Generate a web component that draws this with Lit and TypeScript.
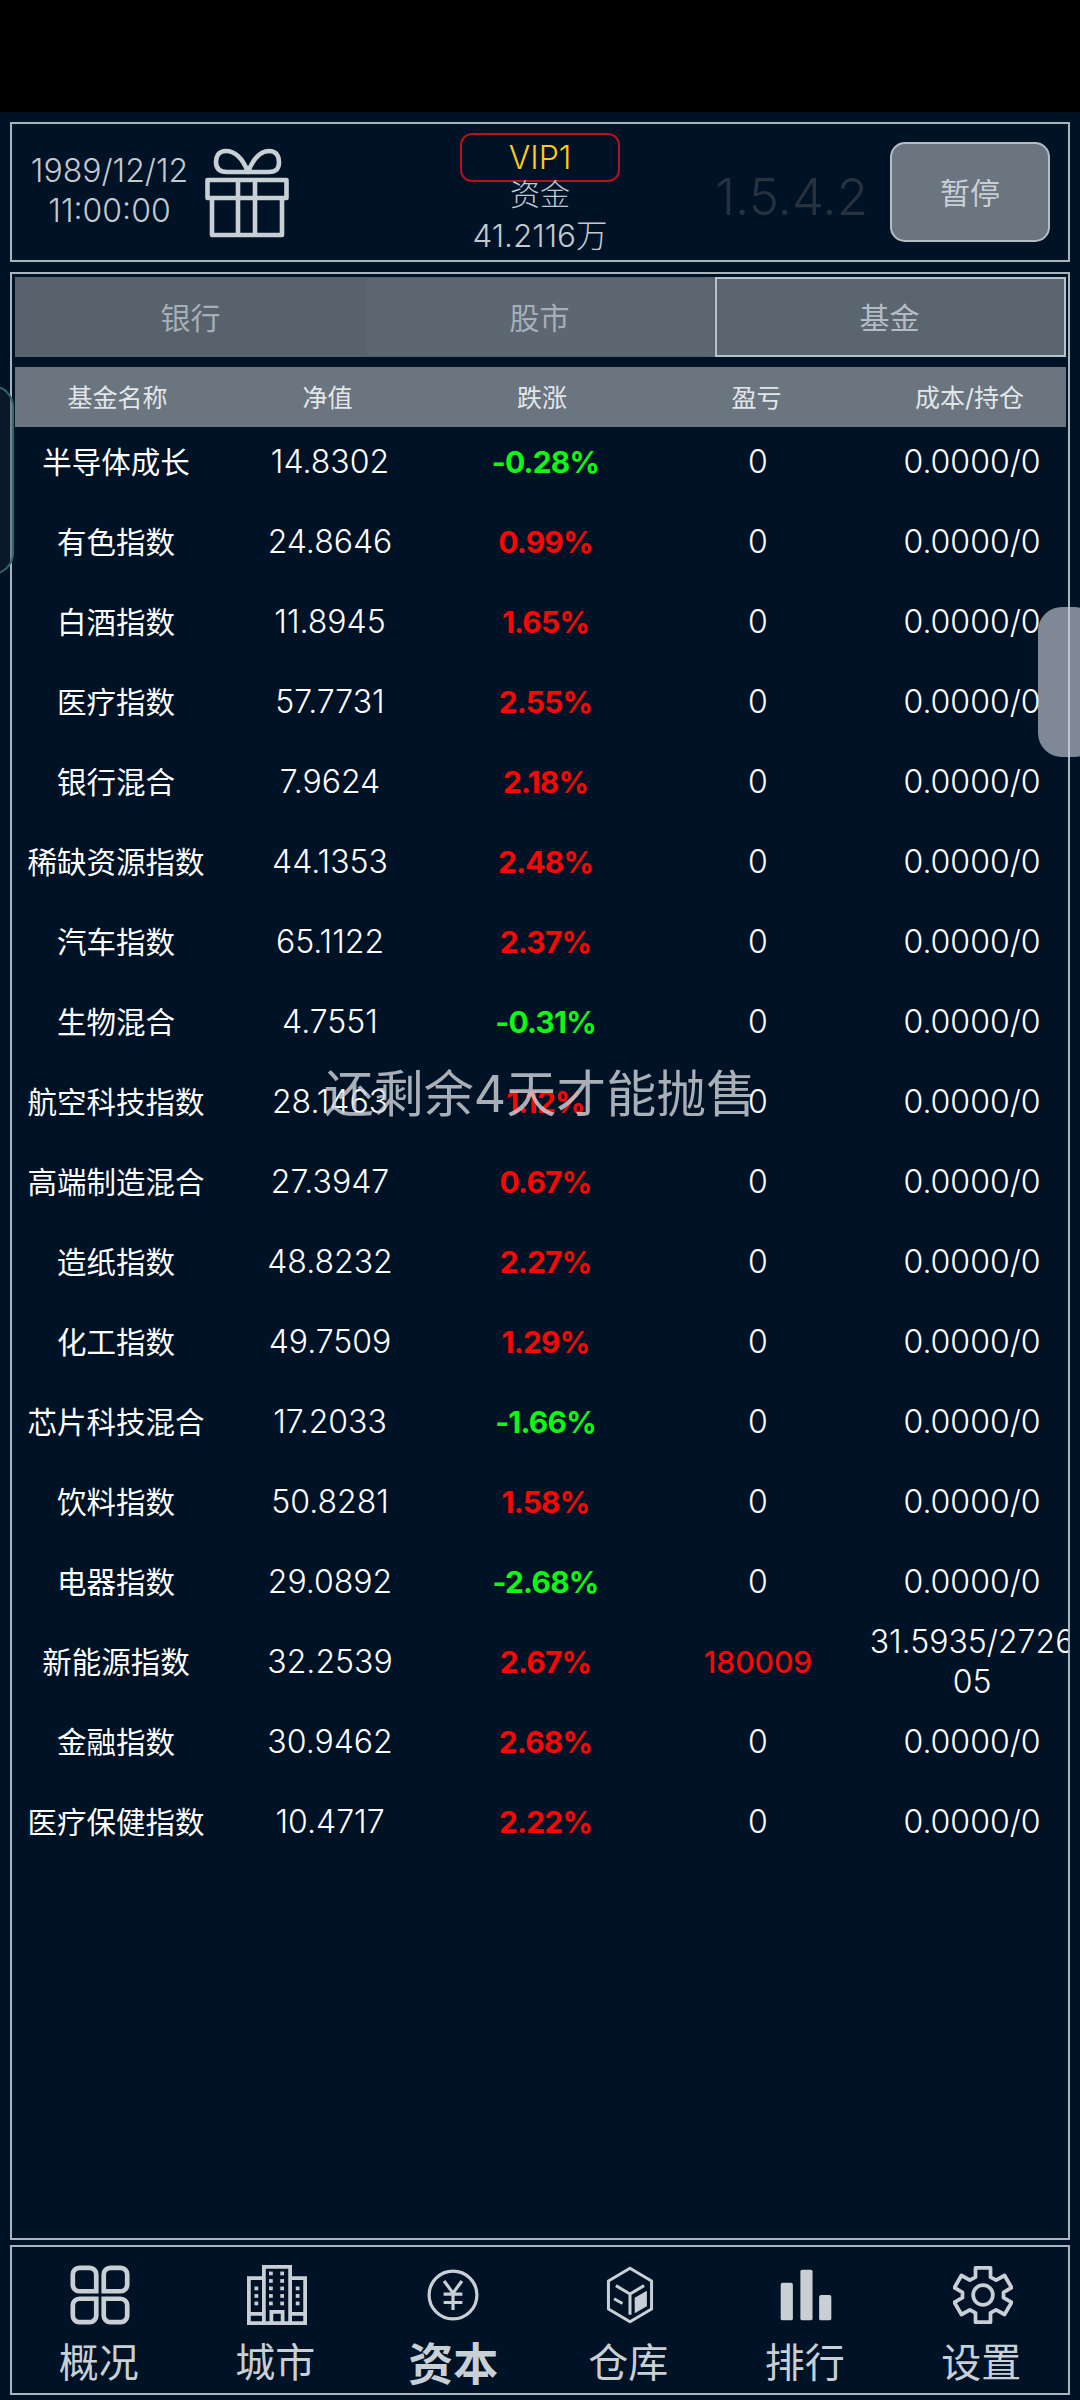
import { LitElement, html, css, svg } from "lit";
import { customElement } from "lit/decorators.js";

const rows: [string, string, string, string, string][] = [
  ["半导体成长", "14.8302", "-0.28%", "0", "0.0000/0"],
  ["有色指数", "24.8646", "0.99%", "0", "0.0000/0"],
  ["白酒指数", "11.8945", "1.65%", "0", "0.0000/0"],
  ["医疗指数", "57.7731", "2.55%", "0", "0.0000/0"],
  ["银行混合", "7.9624", "2.18%", "0", "0.0000/0"],
  ["稀缺资源指数", "44.1353", "2.48%", "0", "0.0000/0"],
  ["汽车指数", "65.1122", "2.37%", "0", "0.0000/0"],
  ["生物混合", "4.7551", "-0.31%", "0", "0.0000/0"],
  ["航空科技指数", "28.1463", "1.12%", "0", "0.0000/0"],
  ["高端制造混合", "27.3947", "0.67%", "0", "0.0000/0"],
  ["造纸指数", "48.8232", "2.27%", "0", "0.0000/0"],
  ["化工指数", "49.7509", "1.29%", "0", "0.0000/0"],
  ["芯片科技混合", "17.2033", "-1.66%", "0", "0.0000/0"],
  ["饮料指数", "50.8281", "1.58%", "0", "0.0000/0"],
  ["电器指数", "29.0892", "-2.68%", "0", "0.0000/0"],
  ["新能源指数", "32.2539", "2.67%", "180009", "31.5935/272605"],
  ["金融指数", "30.9462", "2.68%", "0", "0.0000/0"],
  ["医疗保健指数", "10.4717", "2.22%", "0", "0.0000/0"],
];

const winRows = [7, 15, 23, 31, 39];
const sideRows = [23, 31, 39];
const icons = [
  svg`<g fill="none" stroke="currentColor" stroke-width="5"><path d="M10 3h11a7 7 0 0 1 7 7v18H10a7 7 0 0 1-7-7V10a7 7 0 0 1 7-7z"/><path d="M43 3h11a7 7 0 0 1 7 7v11a7 7 0 0 1-7 7H36V10a7 7 0 0 1 7-7z"/><path d="M3 43a7 7 0 0 1 7-7h18v18a7 7 0 0 1-7 7H10a7 7 0 0 1-7-7z"/><path d="M36 36h18a7 7 0 0 1 7 7v11a7 7 0 0 1-7 7H43a7 7 0 0 1-7-7z"/></g>`,
  svg`<g fill="none" stroke="currentColor" stroke-width="4"><path d="M2 62V14h16M62 62V14H46M18 62V2h28v60"/><path d="M0 62h64M2 52h16M46 52h16M26 62V50h12v12"/></g><g fill="currentColor">${winRows.map(
    (y) => svg`<rect x="23.5" y="${y}" width="4" height="4"/><rect x="35.5" y="${y}" width="4" height="4"/>`
  )}${sideRows.map(
    (y) => svg`<rect x="8" y="${y}" width="4" height="4"/><rect x="52" y="${y}" width="4" height="4"/>`
  )}</g>`,
  svg`<g fill="none" stroke="currentColor"><circle cx="32" cy="32" r="25.5" stroke-width="3.4"/><path stroke-width="3.4" d="M22.500 17l9.500 13 9.500-13M22 31h20M22 40h20M32 30v18"/></g>`,
  svg`<g fill="none" stroke="currentColor" stroke-linejoin="round" stroke-width="3.2"><path d="M32 3.5l23 13.5v30L32 60.5 9 47V17z"/><path d="M17 22l15 9 15-9M32 31v22"/><path d="M15 36l9 5"/></g><path fill="currentColor" d="M37 35l13-7.5v16.5l-13 7.5z"/>`,
  svg`<g fill="currentColor"><rect x="5" y="19" width="13" height="40" rx="2"/><rect x="26" y="5" width="13" height="54" rx="2"/><rect x="46" y="32" width="13" height="27" rx="2"/></g>`,
  svg`<g fill="none" stroke="currentColor" stroke-width="4" stroke-linejoin="round"><path d="M24 3h16v10l6 3.2 9-5 7.5 13-8.6 5v5.6l8.6 5-7.5 13-9-5-6 3.2V61H24V51l-6-3.200-9 5-7.500-13 8.600-5v-5.600l-8.600-5 7.500-13 9 5 6-3.200z"/><circle cx="32" cy="32" r="10.500"/></g>`,
];
const labels = ["概况", "城市", "资本", "仓库", "排行", "设置"];

@customElement("app-root")
export class AppRoot extends LitElement {
  static styles = css`
    :host {
      display: block;
      width: 1080px;
      height: 2400px;
      position: relative;
      overflow: hidden;
      background: #001226;
      font-family: Inter, "Noto Sans CJK SC", sans-serif;
      color: #fff;
    }
    .status { height: 112px; background: #000; }
    .page {
      height: 2288px;
      box-sizing: border-box;
      padding: 10px 10px 0 10px;
      display: flex;
      flex-direction: column;
    }
    .panel { border: 2px solid #aab4bc; box-sizing: border-box; flex: none; }
    .top {
      height: 140px;
      display: grid;
      grid-template-columns: 194px 254px 160px 270px 160px;
      align-items: center;
    }
    .date { font-size: 32px; line-height: 40px; text-align: center; color: #c2c9cf; font-weight: 300; margin-top: -2px; margin-left: 1px; white-space: nowrap; }
    .gift { width: 84px; height: 90px; color: #c8d0d6; margin-left: -1px; margin-top: 2px; display: block; }
    .money { display: flex; flex-direction: column; align-items: center; align-self: start; padding-top: 9px; }
    .vip {
      width: 160px; height: 49px; box-sizing: border-box;
      border: 2px solid #b5121b; border-radius: 12px;
      color: #ffcb16; font-size: 32px; font-weight: 300; line-height: 45px; text-align: center;
    }
    .money-l { font-size: 30px; line-height: 40px; color: #c2c9cf; margin-top: -8px; font-weight: 300; }
    .money-v { font-size: 31.5px; line-height: 44px; color: #c2c9cf; font-weight: 300; white-space: nowrap; }
    .ver { font-size: 51px; font-weight: 300; color: #27323f; text-align: right; padding-right: 22px; margin-top: 8px; white-space: nowrap; }
    .pause {
      width: 160px; height: 100px; box-sizing: border-box; padding-bottom: 2px;
      background: #6a7580; border: 2px solid #b5bec6; border-radius: 15px;
      display: flex; align-items: center; justify-content: center;
      color: #c8ced3; font-size: 30px; margin-top: -1px;
    }
    .main {
      height: 1968px;
      margin-top: 10px;
      overflow: hidden;
      padding: 3px 2px 0 3px;
    }
    .tabs { display: grid; grid-template-columns: 351px 349px 1fr; height: 80px; background: #57626d; }
    .tab { display: flex; align-items: center; justify-content: center; color: #a6aeb6; font-size: 30px; box-sizing: border-box; padding-bottom: 2px; }
    .tab.mid { background: #5c6772; border-radius: 4px; margin: 2px 2px 2px 0; }
    .tab.on { background: #5a6570; border: 2px solid #b8c2c9; color: #b4bcc3; padding-right: 2px; }
    .thead {
      margin-top: 10px; height: 60px; background: #6a7580;
      display: grid; grid-template-columns: 213px 207px 222px 207px 219px;
    }
    .thead div {
      display: flex; align-items: center; justify-content: center; padding-bottom: 2px;
      font-size: 25px; color: #e2e6e9; transform: translateX(-4px);
    }
    .tbody { margin-left: -6px; width: 1070px; }
    .row { display: grid; grid-template-columns: repeat(5, 214px); height: 80px; }
    .row:first-child { margin-top: -5px; }
    .row div {
      display: flex; align-items: center; justify-content: center; text-align: center;
      font-size: 32px; line-height: 40px; color: #fff; font-weight: 300; word-break: break-all;
    }
    .row .name { font-weight: 400; font-size: 29.5px; }
    .row .pct { font-weight: 700; font-size: 30px; letter-spacing: -0.8px; padding-left: 3px; }
    .row .red { color: #fb0505; font-weight: 500; font-size: 30px; }
    .row .pct.red { font-weight: 700; }
    .row .green { color: #10f714; }
    .nav { height: 150px; margin-top: 5px; display: grid; grid-template-columns: repeat(6, 176.5px); }
    .item { display: flex; flex-direction: column; align-items: center; color: #c8d0d6; padding-top: 18px; }
    .item svg { width: 60px; height: 60px; display: block; }
    .item span { font-size: 40px; line-height: 52px; margin-top: 12px; white-space: nowrap; transform: translateX(-1.5px); }
    .item.on span { font-size: 45px; font-weight: 700; margin-top: 14px; transform: none; }
    .handle-r {
      position: absolute; left: 1038px; top: 607px; width: 60px; height: 150px;
      border-radius: 24px; background: rgba(205, 210, 220, 0.62);
    }
    .handle-l {
      position: absolute; left: -44px; top: 385px; width: 58px; height: 190px;
      border-radius: 22px; background: rgba(30, 40, 50, 0.35);
      border: 2px solid #2d6a6c; box-sizing: border-box;
    }
    .toast {
      position: absolute; left: 0; width: 1080px; top: 1060px;
      text-align: center; font-size: 50px; line-height: 68px;
      color: rgba(205, 210, 216, 0.82);
    }
  `;

  render() {
    return html`
      <div class="status"></div>
      <div class="page">
        <div class="panel top">
          <div class="date">1989/12/12<br />11:00:00</div>
          <svg class="gift" viewBox="0 0 84 90" fill="none" stroke="currentColor" stroke-width="4.6" stroke-linejoin="round">
            <path d="M2.500 32h79v18h-79zM7 50v37h70V50M33 32v55M50 32v55"/>
            <path d="M43 24C37 9 29 3 21 3 13 3 11 9 11 14c0 7 4 10 11 10h42c7 0 10-3 10-10 0-5-2-11-10-11-8 0-15 6-21 21z"/>
          </svg>
          <div class="money">
            <div class="vip">VIP1</div>
            <div class="money-l">资金</div>
            <div class="money-v">41.2116万</div>
          </div>
          <div class="ver">1.5.4.2</div>
          <div class="pause">暂停</div>
        </div>
        <div class="panel main">
          <div class="tabs">
            <div class="tab">银行</div>
            <div class="tab mid">股市</div>
            <div class="tab on">基金</div>
          </div>
          <div class="thead">
            <div>基金名称</div><div>净值</div><div>跌涨</div><div>盈亏</div><div>成本/持仓</div>
          </div>
          <div class="tbody">
            ${rows.map(
              (r) => html`<div class="row">
                <div class="name">${r[0]}</div>
                <div>${r[1]}</div>
                <div class="pct ${r[2].startsWith("-") ? "green" : "red"}">${r[2]}</div>
                <div class="${r[3] !== "0" ? "red" : ""}">${r[3]}</div>
                <div>${r[4]}</div>
              </div>`
            )}
          </div>
        </div>
        <div class="panel nav">
          ${labels.map(
            (l, i) => html`<div class="item ${i === 2 ? "on" : ""}">
              <svg viewBox="0 0 64 64">${icons[i]}</svg>
              <span>${l}</span>
            </div>`
          )}
        </div>
      </div>
      <div class="handle-l"></div>
      <div class="handle-r"></div>
      <div class="toast">还剩余4天才能抛售</div>
    `;
  }
}
